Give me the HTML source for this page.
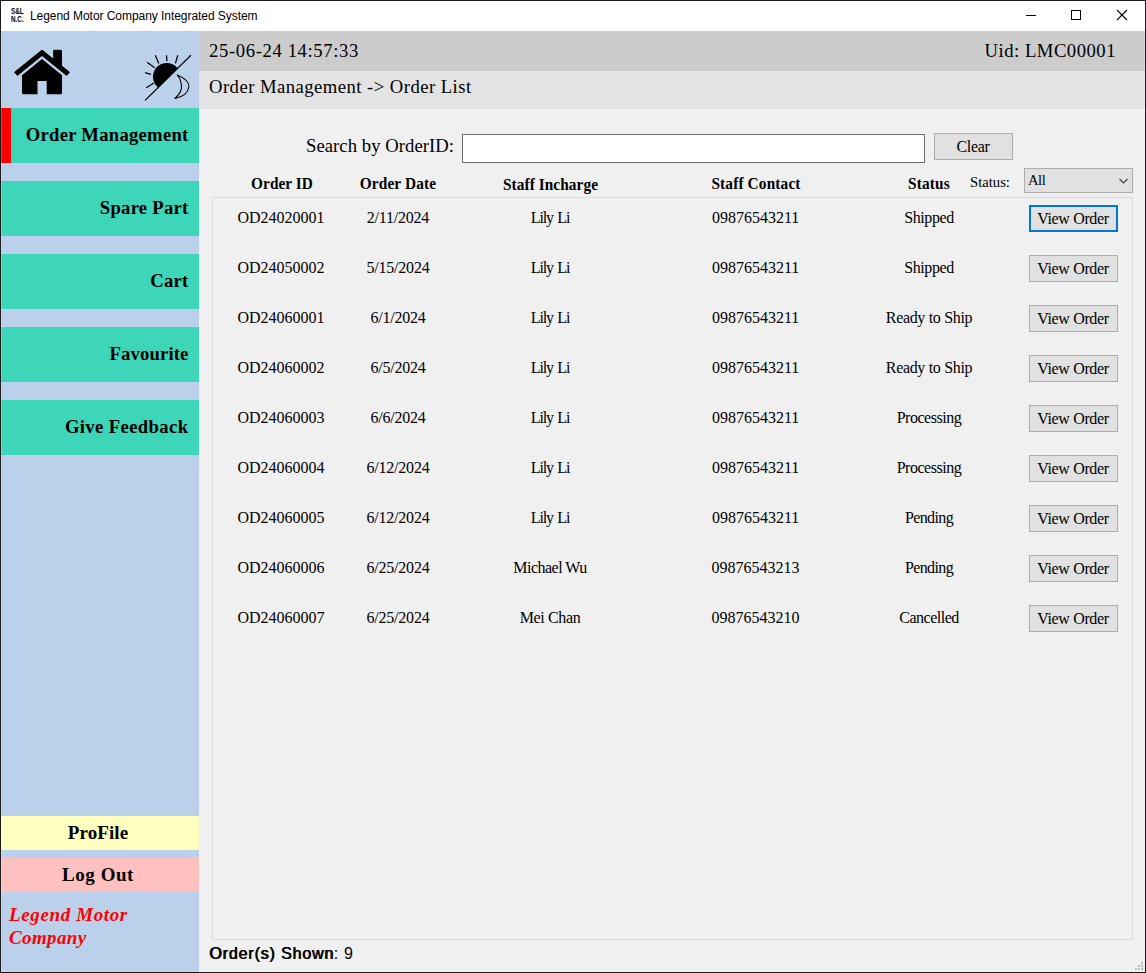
<!DOCTYPE html>
<html>
<head>
<meta charset="utf-8">
<title>Legend Motor Company Integrated System</title>
<style>
html,body{margin:0;padding:0;}
body{width:1146px;height:973px;overflow:hidden;background:#1b1b1b;position:relative;font-family:"Liberation Serif",serif;color:#000;}
.abs{position:absolute;}
#win{position:absolute;left:1px;top:1px;width:1144px;height:971px;background:#f0f0f0;overflow:hidden;}
#titlebar{position:absolute;left:0;top:0;width:1144px;height:30px;background:#fff;}
#title{position:absolute;left:29px;top:7px;font-family:"Liberation Sans",sans-serif;font-size:12px;letter-spacing:-0.05px;line-height:16px;white-space:nowrap;color:#000;}
#appicon{position:absolute;left:9.6px;top:6px;width:30px;height:16px;font-family:"Liberation Sans",sans-serif;font-weight:bold;font-size:9.6px;line-height:7.8px;white-space:nowrap;color:#000;}
#appicon span{display:block;transform-origin:0 0;transform:scaleX(0.66);}
#side{position:absolute;left:0;top:30px;width:198px;height:941px;background:#bbd0eb;}
.nav{position:absolute;left:0;width:198px;height:55px;background:#3dd6b8;font-weight:bold;font-size:18.67px;letter-spacing:0.25px;line-height:54px;text-align:right;white-space:nowrap;}
.nav span{position:absolute;right:10.5px;top:0;}
.bbtn{position:absolute;left:0;width:198px;height:34px;font-weight:bold;font-size:19px;line-height:34px;text-align:center;white-space:nowrap;}
.bbtn span{position:absolute;left:0;width:194px;text-align:center;}
#brand{position:absolute;left:8px;top:872px;font-weight:bold;font-style:italic;font-size:19px;line-height:23px;color:#ff0000;white-space:nowrap;}
#bar1{position:absolute;left:198px;top:30px;width:946px;height:40px;background:#cccccc;}
#bar2{position:absolute;left:198px;top:70px;width:946px;height:38px;background:#e3e3e3;}
.t20{position:absolute;font-size:18.67px;line-height:24px;white-space:nowrap;}
#panel{position:absolute;left:211px;top:196px;width:919px;height:741px;border:1px solid #dcdcdc;}
.hd{position:absolute;font-weight:bold;font-size:15.33px;letter-spacing:0.15px;line-height:18px;white-space:nowrap;text-align:center;width:200px;transform-origin:50% 14px;transform:scaleY(1.09);}
.c{position:absolute;font-size:16px;line-height:18px;white-space:nowrap;text-align:center;width:200px;}
.btn{position:absolute;box-sizing:border-box;background:#e1e1e1;border:1px solid #adadad;font-size:16px;letter-spacing:-0.35px;text-align:center;white-space:nowrap;padding-right:1px;}
.vo{left:1028px;width:89px;height:27px;line-height:25px;}
.vo.focus{border:2px solid #0078d7;line-height:23px;}
#search{position:absolute;box-sizing:border-box;left:461px;top:133px;width:463px;height:29px;background:#fff;border:1px solid #6c6c6c;}
#combo{position:absolute;box-sizing:border-box;left:1023px;top:167px;width:109px;height:25px;background:#e1e1e1;border:1px solid #adadad;font-size:14.67px;letter-spacing:-0.5px;line-height:19px;}
#foot{position:absolute;left:208px;top:943px;font-family:"Liberation Sans",sans-serif;font-size:16px;line-height:20px;white-space:nowrap;}
#foot b{font-weight:normal;letter-spacing:0.85px;text-shadow:0.9px 0 0 #000;}
#edge{position:absolute;left:0;top:0;width:1144px;height:971px;box-sizing:border-box;border:1px solid rgba(255,255,255,0.2);border-top:none;pointer-events:none;}
#grip{position:absolute;left:1133px;top:960px;}
</style>
</head>
<body>
<div id="win">
  <div id="titlebar">
    <div id="appicon"><span>S&amp;L</span><span>N.C.</span></div>
    <div id="title">Legend Motor Company Integrated System</div>
    <svg class="abs" style="left:1005px;top:-1px" width="139" height="30" viewBox="0 0 139 30">
      <path d="M20 15.5H30" stroke="#000" stroke-width="1" fill="none"/>
      <rect x="65.5" y="10.5" width="9" height="9" stroke="#000" stroke-width="1" fill="none"/>
      <path d="M111 10L121 20M121 10L111 20" stroke="#000" stroke-width="1.1" fill="none"/>
    </svg>
  </div>

  <div id="side">
    <svg class="abs" style="left:0;top:0" width="198" height="77" viewBox="1 31 198 77">
      <!-- home -->
      <path d="M42 50.1 L14.6 72.2 L17.4 75.4 L42 55.4 L66.6 75.4 L69.4 72.2 L61.5 65.8 L61.5 50.3 L53.7 50.3 L53.7 59.5 Z" fill="#000" stroke="#000" stroke-width="1" stroke-linejoin="round"/>
      <path d="M42 59 L22 75.3 L22 92.7 Q22 94.2 23.5 94.2 L37.5 94.2 L37.5 81 L46.7 81 L46.7 94.2 L60.5 94.2 Q62 94.2 62 92.7 L62 75.3 Z" fill="#000"/>
      <!-- sun / moon -->
      <g stroke="#000" stroke-width="1.25" fill="none" stroke-linecap="butt" stroke-linejoin="round">
        <path d="M145.1 100.4 L190.9 55.2"/>
        <path d="M155.3 55.2 L158.8 63.4"/>
        <path d="M166.5 55.2 L166.9 61.2"/>
        <path d="M177.8 55.2 L175.4 63.4"/>
        <path d="M147 62.2 L154.7 67.7"/>
        <path d="M145.1 72.7 L151 74.4"/>
        <path d="M146.2 87.8 L153.9 83"/>
        <path d="M177.2 75 Q189.5 80 188.9 87 Q187.5 96 174.8 98.5 Q182 92 181.5 86.5 Q181.5 80 177.2 75 Z" stroke-width="1.1"/>
      </g>
      <path d="M158 87.4 A13.8 13.8 0 1 1 177.6 68.2 Z" fill="#000"/>
    </svg>

    <div class="nav" style="top:77px"><i class="abs" style="left:0;top:0;width:10px;height:55px;background:#ff0000"></i><span>Order Management</span></div>
    <div class="nav" style="top:150px"><span>Spare Part</span></div>
    <div class="nav" style="top:223px"><span>Cart</span></div>
    <div class="nav" style="top:296px"><span style="letter-spacing:0.14px">Favourite</span></div>
    <div class="nav" style="top:369px"><span style="letter-spacing:0.38px">Give Feedback</span></div>

    <div class="bbtn" style="top:785px;background:#ffffc0"><span style="letter-spacing:0.1px">ProFile</span></div>
    <div class="bbtn" style="top:827px;background:#ffc0c0"><span style="letter-spacing:0.55px">Log Out</span></div>
    <div id="brand"><span style="letter-spacing:0.62px">Legend Motor</span><br><span style="letter-spacing:0.38px">Company</span></div>
  </div>

  <div id="bar1"></div>
  <div id="bar2"></div>
  <div class="t20" style="left:208px;top:38px;letter-spacing:0.62px">25-06-24 14:57:33</div>
  <div class="t20" style="right:29px;top:38px;letter-spacing:0.5px">Uid: LMC00001</div>
  <div class="t20" style="left:208px;top:74px;letter-spacing:0.46px">Order Management -&gt; Order List</div>

  <div class="t20" style="left:305px;top:133px;letter-spacing:0.05px">Search by OrderID:</div>
  <div id="search"></div>
  <div class="btn" style="left:933px;top:132px;width:79px;height:27px;line-height:25px;letter-spacing:-0.3px">Clear</div>

  <div class="hd" style="left:181px;top:174px;letter-spacing:0.05px">Order ID</div>
  <div class="hd" style="left:297px;top:174px">Order Date</div>
  <div class="hd" style="left:449.5px;top:175px;letter-spacing:0.07px">Staff Incharge</div>
  <div class="hd" style="left:655px;top:174px">Staff Contact</div>
  <div class="hd" style="left:828px;top:174px">Status</div>
  <div class="abs" style="left:969px;top:172px;font-size:14.67px;line-height:18px;white-space:nowrap">Status:</div>
  <div id="combo"><span class="abs" style="left:3px;top:2px">All</span>
    <svg class="abs" style="right:2px;top:7px" width="12" height="10" viewBox="0 0 12 10"><path d="M1.5 3 L5.5 7 L9.5 3" stroke="#404040" stroke-width="1.1" fill="none"/></svg>
  </div>

  <div id="panel"></div>
  <!--ROWS-->
  <div id="rows">
  <div class="c" style="left:180px;top:208px">OD24020001</div>
  <div class="c" style="left:297px;top:208px;letter-spacing:-0.22px">2/11/2024</div>
  <div class="c" style="left:449px;top:208px;letter-spacing:-1.15px;word-spacing:1.6px">Lily Li</div>
  <div class="c" style="left:654.6px;top:208px">09876543211</div>
  <div class="c" style="left:828px;top:208px;letter-spacing:-0.41px">Shipped</div>
  <div class="btn vo focus" style="top:204px">View Order</div>
  <div class="c" style="left:180px;top:258px">OD24050002</div>
  <div class="c" style="left:297px;top:258px;letter-spacing:-0.22px">5/15/2024</div>
  <div class="c" style="left:449px;top:258px;letter-spacing:-1.15px;word-spacing:1.6px">Lily Li</div>
  <div class="c" style="left:654.6px;top:258px">09876543211</div>
  <div class="c" style="left:828px;top:258px;letter-spacing:-0.41px">Shipped</div>
  <div class="btn vo" style="top:254px">View Order</div>
  <div class="c" style="left:180px;top:308px">OD24060001</div>
  <div class="c" style="left:297px;top:308px;letter-spacing:-0.22px">6/1/2024</div>
  <div class="c" style="left:449px;top:308px;letter-spacing:-1.15px;word-spacing:1.6px">Lily Li</div>
  <div class="c" style="left:654.6px;top:308px">09876543211</div>
  <div class="c" style="left:828px;top:308px;letter-spacing:-0.33px">Ready to Ship</div>
  <div class="btn vo" style="top:304px">View Order</div>
  <div class="c" style="left:180px;top:358px">OD24060002</div>
  <div class="c" style="left:297px;top:358px;letter-spacing:-0.22px">6/5/2024</div>
  <div class="c" style="left:449px;top:358px;letter-spacing:-1.15px;word-spacing:1.6px">Lily Li</div>
  <div class="c" style="left:654.6px;top:358px">09876543211</div>
  <div class="c" style="left:828px;top:358px;letter-spacing:-0.33px">Ready to Ship</div>
  <div class="btn vo" style="top:354px">View Order</div>
  <div class="c" style="left:180px;top:408px">OD24060003</div>
  <div class="c" style="left:297px;top:408px;letter-spacing:-0.22px">6/6/2024</div>
  <div class="c" style="left:449px;top:408px;letter-spacing:-1.15px;word-spacing:1.6px">Lily Li</div>
  <div class="c" style="left:654.6px;top:408px">09876543211</div>
  <div class="c" style="left:828px;top:408px;letter-spacing:-0.47px">Processing</div>
  <div class="btn vo" style="top:404px">View Order</div>
  <div class="c" style="left:180px;top:458px">OD24060004</div>
  <div class="c" style="left:297px;top:458px;letter-spacing:-0.22px">6/12/2024</div>
  <div class="c" style="left:449px;top:458px;letter-spacing:-1.15px;word-spacing:1.6px">Lily Li</div>
  <div class="c" style="left:654.6px;top:458px">09876543211</div>
  <div class="c" style="left:828px;top:458px;letter-spacing:-0.47px">Processing</div>
  <div class="btn vo" style="top:454px">View Order</div>
  <div class="c" style="left:180px;top:508px">OD24060005</div>
  <div class="c" style="left:297px;top:508px;letter-spacing:-0.22px">6/12/2024</div>
  <div class="c" style="left:449px;top:508px;letter-spacing:-1.15px;word-spacing:1.6px">Lily Li</div>
  <div class="c" style="left:654.6px;top:508px">09876543211</div>
  <div class="c" style="left:828px;top:508px;letter-spacing:-0.6px">Pending</div>
  <div class="btn vo" style="top:504px">View Order</div>
  <div class="c" style="left:180px;top:558px">OD24060006</div>
  <div class="c" style="left:297px;top:558px;letter-spacing:-0.22px">6/25/2024</div>
  <div class="c" style="left:449px;top:558px;letter-spacing:-0.52px">Michael Wu</div>
  <div class="c" style="left:654.6px;top:558px">09876543213</div>
  <div class="c" style="left:828px;top:558px;letter-spacing:-0.6px">Pending</div>
  <div class="btn vo" style="top:554px">View Order</div>
  <div class="c" style="left:180px;top:608px">OD24060007</div>
  <div class="c" style="left:297px;top:608px;letter-spacing:-0.22px">6/25/2024</div>
  <div class="c" style="left:449px;top:608px;letter-spacing:-0.37px">Mei Chan</div>
  <div class="c" style="left:654.6px;top:608px">09876543210</div>
  <div class="c" style="left:828px;top:608px;letter-spacing:-0.49px">Cancelled</div>
  <div class="btn vo" style="top:604px">View Order</div>
  </div>
  <!--/ROWS-->

  <svg id="grip" width="10" height="10" viewBox="0 0 10 10" shape-rendering="crispEdges">
    <g fill="#fafafa"><rect x="6.5" y="0.5" width="2" height="2"/><rect x="3.5" y="3.5" width="2" height="2"/><rect x="0.5" y="6.5" width="2" height="2"/></g>
    <g fill="#bfbfbf"><rect x="7" y="1" width="2" height="2"/><rect x="4" y="4" width="2" height="2"/><rect x="7" y="4" width="2" height="2"/><rect x="1" y="7" width="2" height="2"/><rect x="4" y="7" width="2" height="2"/><rect x="7" y="7" width="2" height="2"/></g>
  </svg>
  <div id="foot"><b>Order(s) Shown</b><span style="letter-spacing:0.6px">: 9</span></div>
  <div id="edge"></div>
</div>
</body>
</html>
